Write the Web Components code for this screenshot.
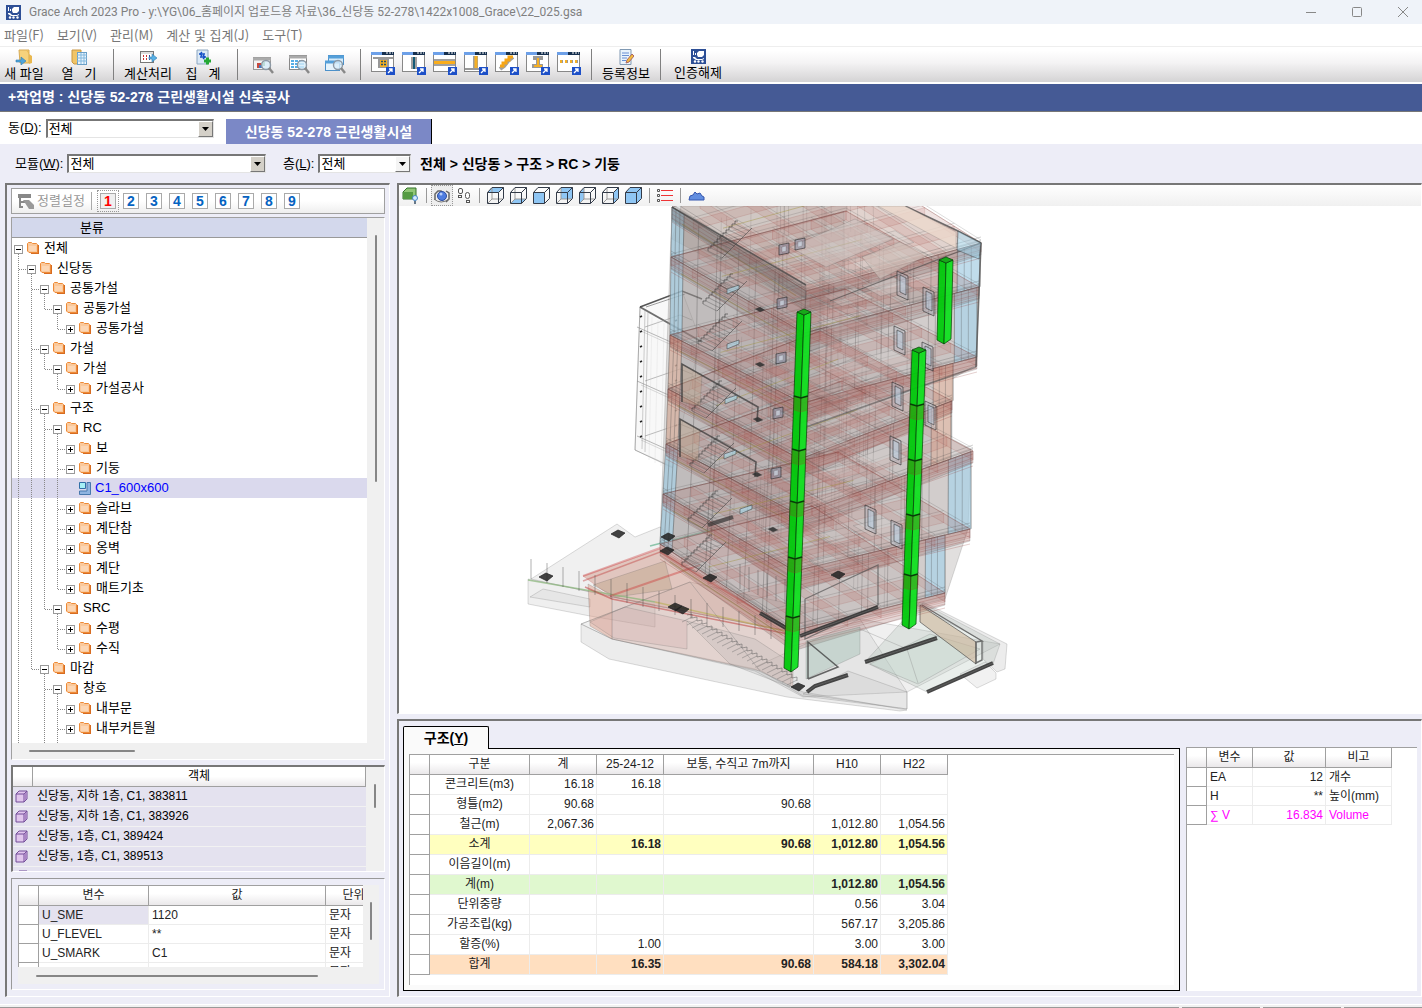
<!DOCTYPE html>
<html lang="ko">
<head>
<meta charset="utf-8">
<title>Grace Arch 2023 Pro</title>
<style>
	html, body { height: 100%; }
	body {
		margin: 0;
		overflow: hidden;
		background: #ededf7;
		color: #000;
		font: 13px/20px "Liberation Sans", "Noto Sans CJK KR", sans-serif;
		--line: #a0a0a0;
		--face: #ededf7;
	}
</style>
</head>
<body>
<grace-app></grace-app>

<script>
// Small drawings used on toolbars and in the lists
const smallWindow = (inner) => `<svg width="25" height="25" viewBox="0 0 25 25">
	<rect x=".5" y="1.5" width="22" height="19" fill="#fff" stroke="#888"/>
	<rect y="1" width="23" height="3" fill="#16304f"/><rect y="1" width="11" height="3" fill="#6da0e8"/>
	<path d="M15 2h2M18 2h2M21 2h1" stroke="#fff"/>${inner}
	<rect x="15" y="16" width="9" height="8" fill="#1d50c8"/><path d="M17 22l4-4M18 18h3v3" stroke="#fff" stroke-width="1.3" fill="none"/></svg>`

const cube = (face) => {
	const faces = {
		top: 'M1 5L5 1H16L12 5Z', bottom: 'M1 16L5 12H16L12 16Z', front: 'M1 5H12V16H1Z',
		back: 'M5 1H16V12H5Z', left: 'M1 5L5 1V12L1 16Z', right: 'M12 5L16 1V12L12 16Z',
		all: 'M1 5L5 1H16V12L12 16H1Z'
	}
	const inside = face === 'all' || face === 'front' ? '' : '<path d="M5 1V12M5 12H16M5 12L1 16" stroke="#999" fill="none"/>'
	return `<svg width="17" height="17" viewBox="0 0 17 17"><path d="${faces[face]}" fill="#8fc6f4"/>${inside}
	<path d="M.5 5.500H11.500V16.500H.5ZM.5 5.500L5 .5H16.500L11.500 5.500M16.500 .5V11.500L11.500 16.500" stroke="#333b48" fill="none"/></svg>`
}

const magnifier = '<circle cx="14" cy="11" r="4.5" fill="#d8edfa" fill-opacity=".8" stroke="#8d99a5" stroke-width="1.4"/><path d="M17 14l4 5" stroke="#888" stroke-width="2.4"/>'

const icons = {
	logo: `<svg width="15" height="15" viewBox="0 0 15 15"><rect width="15" height="15" fill="#2d4f96"/><path d="M2 2h1v4H2zM4 4h1v2H4zM6 4l2-2h5v4l-2 2H7L6 6zM2 8h2l2 2h5l2-1v1l-2 1H5L2 9z" fill="#fff"/><circle cx="4" cy="12.500" r="1.200" fill="#fff"/><circle cx="7.500" cy="12.500" r="1.200" fill="#fff"/><circle cx="11.500" cy="12.500" r="1.200" fill="#fff"/></svg>`,
	newFile: `<svg width="18" height="16" viewBox="0 0 18 16"><path d="M4 1h10v13H5z" fill="#f6d27c" stroke="#d7ab55"/><path d="M11 1l3 2v12l3-1V7l-3-2" fill="#e9b84f"/><path d="M1 11h5V8l5 4-5 4v-3H1z" fill="#4fa5dc" stroke="#347cb0" stroke-width=".6"/></svg>`,
	open: `<svg width="17" height="16" viewBox="0 0 17 16"><path d="M1 1h9v14H3L1 13z" fill="#f1c567" stroke="#c99742"/><rect x="6.5" y="3.500" width="9" height="12" fill="#eaf5fd" stroke="#6b9fc6"/><path d="M6 6h10M6 9h10M6 12h10M10 4v11M13 4v11" stroke="#83b8dd"/></svg>`,
	calc: `<svg width="18" height="16" viewBox="0 0 18 16"><rect x="1.500" y="2.500" width="13" height="11" fill="#fff" stroke="#777"/><path d="M2 4h12" stroke="#bbb"/><path d="M4 7h1M7 7h1M4 10h1M7 10h1" stroke="#c33" stroke-width="2"/><path d="M10 7h1M10 10h1" stroke="#349" stroke-width="2"/><path d="M10 8h3V5l5 4-5 4v-3h-3z" fill="#58b0e5" stroke="#347cb0" stroke-width=".6"/></svg>`,
	sum: `<svg width="16" height="16" viewBox="0 0 16 16"><path d="M2 1h11v14H2z" fill="#dbe9f6" stroke="#8ca6c0"/><path d="M4 5h6M7 3l-2 2 2 2M11 8H5M8 6l2 2-2 2" stroke="#1450c8" stroke-width="1.3" fill="none"/><path d="M9 12h7M12.500 8.500v7" stroke="#25a835" stroke-width="3"/></svg>`,
	view3d: `<svg width="22" height="21" viewBox="0 0 22 21"><rect x="1.500" y="3.500" width="17" height="12" fill="#f3f3f3" stroke="#999"/><path d="M1 5h18" stroke="#aaa" stroke-width="3"/><path d="M5 9h4v5H5z" fill="#c94a3f"/><path d="M10 8h3v4h-3z" fill="#4b9a58"/><path d="M7 11h4v3H7z" fill="#4678c1"/>${magnifier}</svg>`,
	viewTable: `<svg width="22" height="21" viewBox="0 0 22 21"><rect x="1.500" y="1.500" width="17" height="14" fill="#fff" stroke="#888"/><path d="M1 3h18" stroke="#aaa" stroke-width="3"/><path d="M3 6h13v8H3z" fill="#58aee6"/><path d="M3 8.500h13M3 11.500h13M6.500 6v8M10.500 6v8" stroke="#fff"/>${magnifier}</svg>`,
	viewWindows: `<svg width="22" height="21" viewBox="0 0 22 21"><rect x="4.500" y="1.500" width="15" height="9" fill="#d5ebfa" stroke="#4c91ca"/><path d="M4 3h16" stroke="#549fd9" stroke-width="3"/><rect x="1.500" y="7.500" width="14" height="9" fill="#e5f3fc" stroke="#4c91ca"/><path d="M1 8h15" stroke="#549fd9" stroke-width="3"/>${magnifier}</svg>`,
	footing: smallWindow('<path d="M2 7h20" stroke="#999" stroke-width="2"/><path d="M7 8h11v9H7z" fill="#999"/><path d="M9 9h7v7H9z" fill="#f6b025"/><path d="M10 10.500h2M13 10.500h2M10 13.500h2M13 13.500h2" stroke="#23506e" stroke-width="1.500"/>'),
	column: smallWindow('<path d="M9 6h6v12H9z" fill="#a0a0a0"/><path d="M12 6v12" stroke="#155a75" stroke-width="2"/>'),
	beam: smallWindow('<path d="M1 8h21v7H1z" fill="#a0a0a0"/><path d="M1 11.500h21" stroke="#f9ad1d" stroke-width="3"/>'),
	wall: smallWindow('<path d="M9 5h5v13H9z" fill="#a0a0a0"/><path d="M12 5v13" stroke="#f6b025" stroke-width="3"/><path d="M1 18h15" stroke="#999" stroke-width="2"/>'),
	stairs: smallWindow('<path d="M5 18l4-3 4-5 5-4" fill="none" stroke="#a0a0a0" stroke-width="4"/><path d="M5 15h3v-3h3V9h3V6h4" fill="none" stroke="#f6a515" stroke-width="3"/>'),
	steel: smallWindow('<path d="M7 7h10M6 15h11M12 7v9" stroke="#999" stroke-width="4"/><path d="M12 7v8M8 15h8" stroke="#f6b025" stroke-width="2"/>'),
	line: smallWindow('<path d="M3 10.500h18" stroke="#999" stroke-width="3" stroke-dasharray="3 2"/><path d="M3 10.500h18" stroke="#f6b025" stroke-width="3" stroke-dasharray="2 3"/>'),
	info: `<svg width="16" height="16" viewBox="0 0 16 16"><path d="M2 .5h11v15H2z" fill="#e9f3fc" stroke="#8099b3"/><path d="M4 4h7M4 6.500h7M4 9h5M4 11.500h4" stroke="#698fd3"/><path d="M8 14l1-3 5-6 2 2-5 6z" fill="#f3bd3b" stroke="#a66"/></svg>`,
	sort: `<svg width="17" height="16" viewBox="0 0 17 16"><path d="M1 1h13v4H1z" fill="#888"/><path d="M3 5v9h3M4 9h4" fill="none" stroke="#888" stroke-width="2"/><path d="M6 7h6l5 5v4h-5z" fill="#999"/></svg>`,
	object: `<svg width="17" height="18" viewBox="0 0 17 18"><path d="M1 5l4-4h9v8l-3 3H1z" fill="#91c776" stroke="#35732c"/><path d="M1 5h10v7H1z" fill="#559b43"/><circle cx="13" cy="11" r="2.500" fill="#d4eaff" stroke="#4686c4"/><path d="M13 14v3" stroke="#678" stroke-width="2"/></svg>`,
	orbit: `<svg width="18" height="16" viewBox="0 0 18 16"><path d="M2 12V6l3-3h3v3M13 3l3 2v6l-3 3" fill="none" stroke="#666" stroke-width="1.500"/><circle cx="9" cy="8" r="4.500" fill="#4f7de0" stroke="#2b4da0"/><path d="M1 11q7 6 15 0" fill="none" stroke="#777"/><circle cx="8" cy="6" r="1.500" fill="#b6cdfa"/></svg>`,
	walk: `<svg width="14" height="17" viewBox="0 0 14 17"><g fill="#fff" stroke="#555"><rect x="1.500" y="1.500" width="4" height="5" rx="1.500"/><rect x="1.500" y="8.500" width="3" height="2"/><rect x="8.500" y="5.500" width="4" height="6" rx="2"/><rect x="9.500" y="13.500" width="3" height="2"/></g></svg>`,
	layers: `<svg width="16" height="15" viewBox="0 0 16 15"><path d="M4 2.500h12M4 7.500h12M4 12.500h12" stroke="#ee3435"/><path d="M.5 1.500h2v2h-2zM.5 6.500h2v2h-2zM.5 11.500h2v2h-2z" fill="#fff" stroke="#555"/></svg>`,
	terrain: `<svg width="17" height="10" viewBox="0 0 17 10"><path d="M1 9L2 5l3-1 2-3 2 2 3-1 2 3 2 1v3z" fill="#628ee0" stroke="#3556ae"/></svg>`,
	folder: `<svg width="13" height="13" viewBox="0 0 13 13"><path d="M3 3h9v9H4z" fill="#d76c21"/><path d="M.5 1.500l1-1h3l1 1h4l1 1v8H2L.5 9z" fill="#fac99c" stroke="#ee8b38"/><path d="M2 4h7v5H2z" fill="#fee0c5" opacity=".6"/></svg>`,
	member: `<svg width="12" height="13" viewBox="0 0 12 13"><path d="M8 .5h3.500v12H.5V9H8z" fill="#8fb4e0" stroke="#4778ad"/><path d="M.5.5h6v6h-6z" fill="#a5f0f5" stroke="#316fa7"/></svg>`,
	box: `<svg width="13" height="13" viewBox="0 0 13 13"><path d="M1 4l3-3h8v8l-3 3H1z" fill="#e1c6ed" stroke="#734d98"/><path d="M1 4h8v8M9 4l3-3" fill="none" stroke="#734d98"/><path d="M9.500 4l2-2v7l-2 2z" fill="#aa84c4"/></svg>`
}
for(const face of [ 'top', 'bottom', 'front', 'back', 'left', 'right', 'all' ]) {
	icons['cube-' + face] = cube(face)
}

class UiIcon extends HTMLElement {
	constructor() {
		super()
		this.attachShadow({ mode: 'open' })
	}
	connectedCallback() {
		this.shadowRoot.innerHTML = `
		<style>
		:host { display: inline-flex; flex: none; }
		svg { display: block; }
		</style>${icons[this.getAttribute('name')]}`
	}
}
window.customElements.define('ui-icon', UiIcon)

class TitleBar extends HTMLElement {
	constructor() {
		super()
		this.attachShadow({ mode: 'open' })
		this.shadowRoot.innerHTML = `
		<style>
		:host {
			display: flex;
			align-items: center;
			gap: 8px;
			height: 24px;
			padding-left: 6px;
			background: #eff3f9;
			color: #808080;
			font: 12px/24px Roboto, "Noto Sans CJK KR", sans-serif;
		}
		.text { flex: 1; white-space: nowrap; }
		button {
			width: 38px;
			height: 24px;
			padding: 0;
			border: 0;
			background: none;
		}
		svg { display: block; margin: auto; fill: none; stroke: #888; }
		</style>
		<ui-icon name="logo"></ui-icon>
		<span class="text"><slot></slot></span>
		<button aria-label="최소화"><svg width="11" height="11"><path d="M0 5.500h10"/></svg></button>
		<button aria-label="최대화"><svg width="11" height="11"><rect x=".5" y=".5" width="9" height="9" rx="1"/></svg></button>
		<button aria-label="닫기"><svg width="11" height="11"><path d="M0 0l10 10M10 0L0 10"/></svg></button>
		`
	}
}
window.customElements.define('title-bar', TitleBar)

class MenuBar extends HTMLElement {
	constructor() {
		super()
		this.attachShadow({ mode: 'open' })
		this.shadowRoot.innerHTML = `
		<style>
		:host {
			display: flex;
			gap: 13px;
			height: 22px;
			padding-left: 4px;
			background: #fff;
			border-bottom: 1px solid #eee;
		}
		button {
			padding: 0;
			border: 0;
			background: none;
			color: #777;
			font: 13px/22px "Noto Sans CJK KR", sans-serif;
		}
		</style>
		<button>파일(F)</button><button>보기(V)</button><button>관리(M)</button><button>계산 및 집계(J)</button><button>도구(T)</button>
		`
	}
}
window.customElements.define('menu-bar', MenuBar)

class ToolButton extends HTMLElement {
	constructor() {
		super()
		this.attachShadow({ mode: 'open' })
	}
	connectedCallback() {
		const label = this.getAttribute('label')
		this.shadowRoot.innerHTML = `
		<style>
		:host { display: block; flex: none; }
		button {
			display: flex;
			flex-direction: column;
			align-items: center;
			justify-content: center;
			width: 100%;
			height: 100%;
			padding: 0;
			border: 0;
			background: none;
			color: #000;
			font: 13px/16px "Noto Sans CJK KR", sans-serif;
			white-space: pre;
		}
		</style>
		<button aria-label="${label || this.getAttribute('icon')}"><ui-icon name="${this.getAttribute('icon')}"></ui-icon>${label || ''}</button>
		`
	}
}
window.customElements.define('tool-button', ToolButton)

class MainToolbar extends HTMLElement {
	constructor() {
		super()
		this.attachShadow({ mode: 'open' })
		const shapes = [ 'footing', 'column', 'beam', 'wall', 'stairs', 'steel', 'line' ]
		this.shadowRoot.innerHTML = `
		<style>
		:host {
			display: flex;
			height: 35px;
			background: linear-gradient(#fff 10%, #f4f3f4 45%, #d4d3d4);
			border-bottom: 2px solid #fff;
		}
		div { display: flex; }
		.big { gap: 7px; }
		.big tool-button { width: 48px; }
		.view { gap: 6px; }
		.view tool-button { width: 30px; }
		.shape { gap: 7px; }
		.shape tool-button { width: 24px; height: 32px; }
		.license { padding-left: 3px; }
		i { width: 1px; margin: 2px 10px; background: #808080; }
		</style>
		<div class="big"><tool-button icon="newFile" label="새 파일"></tool-button><tool-button icon="open" label="열   기"></tool-button></div><i></i>
		<div class="big"><tool-button icon="calc" label="계산처리"></tool-button><tool-button icon="sum" label="집   계"></tool-button></div><i></i>
		<div class="view"><tool-button icon="view3d"></tool-button><tool-button icon="viewTable"></tool-button><tool-button icon="viewWindows"></tool-button></div><i></i>
		<div class="shape">${shapes.map((s) => `<tool-button icon="${s}"></tool-button>`).join('')}</div><i></i>
		<div class="big"><tool-button icon="info" label="등록정보"></tool-button></div><i></i>
		<div class="big license"><tool-button icon="logo" label="인증해제"></tool-button></div>
		`
	}
}
window.customElements.define('main-toolbar', MainToolbar)

// Labelled drop-down, the label goes in the slot
class ComboBox extends HTMLElement {
	constructor() {
		super()
		this.attachShadow({ mode: 'open' })
	}
	connectedCallback() {
		this.shadowRoot.innerHTML = `
		<style>
		:host { display: block; }
		label { display: flex; align-items: center; gap: 4px; white-space: nowrap; }
		.field {
			display: flex;
			position: relative;
			flex: 1;
			height: 16px;
			border: 1px solid #e4e4e4;
			border-top: 2px solid #777;
			border-left: 2px solid #777;
			background: #fff;
		}
		select {
			flex: 1;
			min-width: 0;
			padding: 0 1px;
			appearance: none;
			border: 0;
			background: none;
			color: #000;
			font: inherit;
			line-height: 16px;
		}
		svg {
			position: absolute;
			right: 0;
			top: 0;
			pointer-events: none;
			background: ${this.hasAttribute('light') ? '#f4f4f4' : '#d4d0c8'};
			border: 1px solid #fff;
			border-right-color: #777;
			border-bottom-color: #777;
		}
		</style>
		<label><span><slot></slot></span>
			<span class="field"><select><option>전체</option></select>
			<svg width="13" height="14"><path d="M3 5h7L6.500 9z"/></svg></span>
		</label>
		`
	}
}
window.customElements.define('combo-box', ComboBox)

class ScrollMark extends HTMLElement {
	constructor() {
		super()
		this.attachShadow({ mode: 'open' })
		this.shadowRoot.innerHTML = `
		<style>
		:host { display: block; background: #f0f0f0; }
		div { background: #868686; border-radius: 1px; width: 2px; height: 100%; margin: 0 auto; }
		:host([horizontal]) div { width: 100%; height: 2px; }
		</style>
		<div></div>
		`
	}
}
window.customElements.define('scroll-mark', ScrollMark)

class SortBar extends HTMLElement {
	constructor() {
		super()
		this.attachShadow({ mode: 'open' })
		const numbers = [ 1, 2, 3, 4, 5, 6, 7, 8, 9 ]
		this.shadowRoot.innerHTML = `
		<style>
		:host {
			display: flex;
			align-items: center;
			height: 24px;
			padding-left: 5px;
			border: 1px solid var(--line);
			background: linear-gradient(#fff 50%, #eee);
		}
		button { padding: 0; border: 0; background: none; font: inherit; }
		.sort { display: flex; align-items: center; gap: 3px; color: #999; }
		i { width: 1px; height: 18px; margin: 0 8px 0 6px; background: #aaa; }
		.numbers { display: flex; gap: 7px; }
		.numbers button {
			width: 16px;
			height: 16px;
			border: 1px solid #aaa;
			background: #fff;
			color: #0563c1;
			font: bold 14px/14px "Liberation Sans", sans-serif;
		}
		.numbers button:first-child { background: #f0f0f0; color: #f00; outline: 1px dotted #999; outline-offset: 2px; }
		</style>
		<button class="sort"><ui-icon name="sort"></ui-icon>정렬설정</button><i></i>
		<div class="numbers">${numbers.map((n) => `<button>${n}</button>`).join('')}</div>
		`
	}
}
window.customElements.define('sort-bar', SortBar)

class TreeView extends HTMLElement {
	constructor() {
		super()
		this.attachShadow({ mode: 'open' })
		// guides (I = line, T = branch, L = last branch), state, text
		const rows = [
			[ '', '-', '전체' ], [ 'T', '-', '신당동' ],
			[ 'IT', '-', '공통가설' ], [ 'IIL', '-', '공통가설' ], [ 'II L', '+', '공통가설' ],
			[ 'IT', '-', '가설' ], [ 'IIL', '-', '가설' ], [ 'II L', '+', '가설공사' ],
			[ 'IT', '-', '구조' ], [ 'IIT', '-', 'RC' ],
			[ 'IIIT', '+', '보' ], [ 'IIIT', '=', '기둥' ], [ 'IIII', '', 'C1_600x600' ],
			[ 'IIIT', '+', '슬라브' ], [ 'IIIT', '+', '계단참' ], [ 'IIIT', '+', '옹벽' ],
			[ 'IIIT', '+', '계단' ], [ 'IIIL', '+', '매트기초' ],
			[ 'IIL', '-', 'SRC' ], [ 'II T', '+', '수평' ], [ 'II L', '+', '수직' ],
			[ 'IL', '-', '마감' ], [ 'I T', '-', '창호' ],
			[ 'I IT', '+', '내부문' ], [ 'I IT', '+', '내부커튼월' ], [ 'I II', 'end', '' ]
		]
		const paths = { 'I': 'M6.500 0V20', 'T': 'M6.500 0V20M7 11.500H13', 'L': 'M6.500 0V11M7 11.500H13', ' ': '' }
		const dotted = (d) => `<path d="${d}" stroke="#888" stroke-dasharray="1 1"/>`
		const guide = (g) => `<svg width="13" height="20">${dotted(paths[g])}</svg>`
		const knob = (s, root) => s === '' ? '<svg width="13" height="20"></svg>' : `<svg width="13" height="20">
			${dotted((s === '-' ? 'M6.500 16V20' : '') + (root ? '' : 'M0 11.500H2'))}
			<rect x="2.500" y="7.500" width="8" height="8" fill="#fff" stroke="#999"/>
			<path d="M4 11.500H9${s === '+' ? 'M6.500 9V14' : ''}" stroke="#000"/></svg>`
		const row = ([ guides, state, text ]) => state === 'end'
			? `<li class="end">${[ ...guides ].map(guide).join('')}</li>`
			: `<li class="${state ? '' : 'selected'}">${[ ...guides ].map(guide).join('')}${knob(state, !guides)}<ui-icon name="${state ? 'folder' : 'member'}"></ui-icon>${text}</li>`
		this.shadowRoot.innerHTML = `
		<style>
		:host {
			display: grid;
			grid-template: minmax(0, 1fr) 16px / minmax(0, 1fr) 17px;
			border: 1px solid var(--line);
			border-right-color: #fff;
			border-bottom-color: #fff;
			background: #f0f0f0;
		}
		.body { overflow: hidden; background: #fff; }
		header {
			padding-left: 68px;
			line-height: 19px;
			background: #d3d8ec;
			border-bottom: 1px solid #999;
		}
		ul { margin: 0; padding: 0; list-style: none; }
		li { display: flex; align-items: center; height: 20px; white-space: nowrap; }
		li svg { display: block; flex: none; fill: none; }
		li ui-icon { margin: 0 4px 0 2px; }
		.selected { background: #dad9ed; color: #00f; }
		.v { padding: 17px 0 261px; }
		.h { padding: 7px 232px 0 17px; }
		</style>
		<div class="body"><header>분류</header><ul>${rows.map(row).join('')}</ul></div>
		<scroll-mark class="v"></scroll-mark>
		<scroll-mark class="h" horizontal></scroll-mark>
		`
	}
}
window.customElements.define('tree-view', TreeView)

class ObjectList extends HTMLElement {
	constructor() {
		super()
		this.attachShadow({ mode: 'open' })
		const objects = [ '신당동, 지하 1층, C1, 383811', '신당동, 지하 1층, C1, 383926', '신당동, 1층, C1, 389424', '신당동, 1층, C1, 389513', '' ]
		this.shadowRoot.innerHTML = `
		<style>
		:host {
			display: flex;
			height: 104px;
			overflow: hidden;
			border: 1px solid #fff;
			border-top: 2px solid #777;
			border-left: 2px solid #777;
			background: #f0f0f0;
		}
		table { flex: 1; border-collapse: separate; border-spacing: 0; table-layout: fixed; font-size: 12px; }
		col:first-child { width: 20px; }
		th, td { height: 19px; padding: 0; line-height: 19px; }
		th { font-weight: normal; background: linear-gradient(#fff 50%, #eceaec); border: solid #a0a0a0; border-width: 0 1px 1px 0; }
		td { background: #e4e2ef; border-bottom: 1px solid #f2f2f2; }
		td + td { padding-left: 4px; }
		td ui-icon { display: flex; padding-left: 2px; }
		scroll-mark { width: 18px; padding: 17px 0 63px; }
		</style>
		<table><colgroup><col><col></colgroup>
			<tr><th></th><th>객체</th></tr>
			${objects.map((o) => `<tr><td><ui-icon name="box"></ui-icon></td><td>${o}</td></tr>`).join('')}
		</table>
		<scroll-mark></scroll-mark>
		`
	}
}
window.customElements.define('object-list', ObjectList)

// Table with a row header gutter. Data comes from the grids map by name.
const grids = {
	variables: {
		widths: [ 20, 110, 177, 56 ], row: 18,
		head: [ '변수', '값', '단위' ],
		align: [ 'left', 'left', 'left' ],
		rows: [ [ 'first', 'U_SME', '1120', '문자' ], [ '', 'U_FLEVEL', '**', '문자' ], [ '', 'U_SMARK', 'C1', '문자' ], [ '', 'U_SYMB', '', '문자' ] ]
	},
	quantity: {
		widths: [ 20, 100, 67, 67, 150, 67, 67 ], row: 19,
		head: [ '구분', '계', '25-24-12', '보통, 수직고 7m까지', 'H10', 'H22' ],
		align: [ 'center', 'right', 'right', 'right', 'right', 'right' ],
		rows: [
			[ '', '콘크리트(m3)', '16.18', '16.18', '', '', '' ],
			[ '', '형틀(m2)', '90.68', '', '90.68', '', '' ],
			[ '', '철근(m)', '2,067.36', '', '', '1,012.80', '1,054.56' ],
			[ 'sub', '소계', '', '16.18', '90.68', '1,012.80', '1,054.56' ],
			[ '', '이음길이(m)', '', '', '', '', '' ],
			[ 'sum', '계(m)', '', '', '', '1,012.80', '1,054.56' ],
			[ '', '단위중량', '', '', '', '0.56', '3.04' ],
			[ '', '가공조립(kg)', '', '', '', '567.17', '3,205.86' ],
			[ '', '할증(%)', '', '1.00', '', '3.00', '3.00' ],
			[ 'total', '합계', '', '16.35', '90.68', '584.18', '3,302.04' ]
		]
	},
	result: {
		widths: [ 20, 46, 73, 66 ], row: 18,
		head: [ '변수', '값', '비고' ],
		align: [ 'left', 'right', 'left' ],
		rows: [ [ '', 'EA', '12', '개수' ], [ '', 'H', '**', '높이(mm)' ], [ 'volume', '∑ V', '16.834', 'Volume' ] ]
	}
}

class DataGrid extends HTMLElement {
	constructor() {
		super()
		this.attachShadow({ mode: 'open' })
	}
	connectedCallback() {
		const grid = grids[this.getAttribute('name')]
		const total = grid.widths.reduce((a, b) => a + b, 0)
		this.shadowRoot.innerHTML = `
		<style>
		:host {
			display: block;
			overflow: hidden;
			background: #fff;
			border: solid var(--line);
			border-width: 1px 0 0 1px;
			color: #222;
		}
		table { width: ${total}px; table-layout: fixed; border-collapse: separate; border-spacing: 0; font-size: 12px; }
		th, td {
			box-sizing: border-box;
			height: ${grid.row + 1}px;
			padding: 0 2px;
			line-height: ${grid.row}px;
			border: solid #ececec;
			border-width: 0 1px 1px 0;
			white-space: nowrap;
		}
		th { font-weight: normal; border-color: var(--line); }
		thead th { height: 20px; line-height: 19px; background: linear-gradient(#fff 40%, #eae8ea); }
		.left { padding-left: 3px; text-align: left; }
		.center { text-align: center; }
		.right { text-align: right; }
		.sub td { background: #ffffbf; }
		.sum td { background: #e0f8cf; }
		.total td { background: #ffdfc0; }
		.sub .right, .sum .right, .total .right { font-weight: bold; }
		.first td:nth-child(2) { background: #e4e2ef; }
		.volume { color: #f0f; }
		</style>
		<table>
			<colgroup>${grid.widths.map((w) => `<col style="width: ${w}px">`).join('')}</colgroup>
			<thead><tr><th></th>${grid.head.map((h) => `<th>${h}</th>`).join('')}</tr></thead>
			<tbody>${grid.rows.map(([ kind, ...cells ]) => `<tr class="${kind}"><th></th>${cells.map((c, i) => `<td class="${grid.align[i]}">${c}</td>`).join('')}</tr>`).join('')}</tbody>
		</table>
		`
	}
}
window.customElements.define('data-grid', DataGrid)

class ViewToolbar extends HTMLElement {
	constructor() {
		super()
		this.attachShadow({ mode: 'open' })
		const faces = [ 'top', 'bottom', 'front', 'back', 'left', 'right', 'all' ]
		this.shadowRoot.innerHTML = `
		<style>
		:host {
			display: flex;
			height: 21px;
			background: linear-gradient(#fff, #f0f0f0);
		}
		tool-button { width: 23px; }
		.nav { width: 22px; }
		.on { background: #eee; outline: 1px dotted #999; outline-offset: -1px; }
		i { width: 1px; margin: 3px 4px; background: #999; }
		</style>
		<tool-button icon="object"></tool-button><i></i>
		<tool-button icon="orbit" class="nav on"></tool-button><tool-button icon="walk" class="nav"></tool-button><i></i>
		${faces.map((f) => `<tool-button icon="cube-${f}"></tool-button>`).join('')}<i></i>
		<tool-button icon="layers" class="nav"></tool-button><i></i>
		<tool-button icon="terrain"></tool-button>
		`
	}
}
window.customElements.define('view-toolbar', ViewToolbar)

// Building model: floors are stacked quads seen from the front corner
class ModelView extends HTMLElement {
	constructor() {
		super()
		this.attachShadow({ mode: 'open' })
		this.shadowRoot.innerHTML = `
		<style>
		:host { display: block; min-height: 0; overflow: hidden; background: #fff; }
		svg { display: block; width: 100%; height: 100%; }
		</style>
		<svg viewBox="399 207 1022 505" preserveAspectRatio="xMidYMin meet" role="img" aria-label="3D 모델">
			${this._site()}${this._frame()}${this._building()}${this._details()}${this._columns()}
		</svg>
		`
	}
	_poly(points, fill, alpha = 1, stroke = '#555', strokeAlpha = 0.3) {
		return `<polygon points="${points}" fill="${fill}" fill-opacity="${alpha}" stroke="${stroke}" stroke-opacity="${strokeAlpha}" stroke-width=".7"/>`
	}
	_line(points, stroke, width = 0.7, alpha = 1) {
		return `<polyline points="${points}" fill="none" stroke="${stroke}" stroke-width="${width}" stroke-opacity="${alpha}"/>`
	}
	_site() {
		return [
			this._poly('531,580 617,525 635,538 660,528 700,560 793,633 650,606', '#999', .15),
			this._poly('528,580 655,606 655,628 590,617 528,605', '#999', .16),
			this._poly('543,590 590,600 590,608 530,598', '#999', .1),
			this._poly('581,625 612,640 755,670 803,693 907,711 900,712 787,698 609,660 581,643', '#aaa', .22),
			this._poly('581,625 690,583 860,620 1000,645 907,693 803,698 755,672 612,640', '#999', .15),
			this._poly('755,668 860,620 907,693 907,710 803,697', '#888', .1),
			this._poly('612,640 612,598 793,633 793,688 760,672', '#c99a90', .34),
			this._poly('590,627 588,585 612,598 612,640', '#db9982', .45),
			this._poly('583,577 660,550 793,633 612,598', '#cc8c7c', .42, '#c44'),
			this._poly('593,586 665,562 672,590 616,598', '#b9a184', .4),
			this._poly('590,623 625,608 687,622 687,650 614,639', '#c99', .2),
			this._poly('687,622 755,640 793,665 790,688 730,665', '#aaa', .2),
			this._poly('865,663 920,603 1000,645 993,665 927,693', '#a3b7aa', .24),
			this._poly('870,665 930,635 980,650 918,685', '#bdd4c9', .3),
			this._poly('923,603 1007,645 1005,670 997,673 983,660 983,642 920,608', '#aaa', .22),
			this._poly('920,606 976,643 976,665 920,623', '#cbb498', .6, '#333', .8),
			this._line('922,606 982,642 976,643 976,664 982,661 982,642', '#555', 1.4, .8),
			this._poly('803,695 848,672 907,693 907,710', '#aaa', .15),
			this._poly('960,675 985,663 996,674 996,680 977,689', '#bbb', .2),
			this._line('528,581 655,603', '#88b577', 1.5, .7),
			this._line('655,603 793,634', '#bdb060', 1.3, .7),
			this._line('650,547 715,530', '#62b28d', 1.5, .7),
			this._line('583,577 660,549', '#c44', 2, .4),
			this._line('583,582 660,553 791,632', '#b33', 1.5, .4),
			this._line('585,588 612,600 793,636', '#b33', 1.5, .5),
			this._line('610,597 700,566', '#c33', 2, .4),
			this._line('581,625 690,583 760,672', '#777', .7, .5),
			this._line('860,630 907,650 918,684', '#888', .7, .5)
		].join('')
	}
	_frame() {
		let out = this._poly('640,308 682,292 700,340 673,468 635,451', '#aaa', .08)
		out += this._line('640,308 682,292 702,300', '#333', 1.5, .8)
		out += this._line('640,308 702,343', '#333', 2, .7)
		out += this._line('646,308 685,295', '#555', .7, .8)
		out += this._line('640,308 635,451 673,469', '#777', .8, .6)
		out += this._line('645,311 642,450', '#888', .7, .6)
		out += this._line('648,312 645,453', '#888', .7, .6)
		for(const y of [ 328, 382, 437 ]) {
			out += this._line(`645,${y} 680,${y - 12} 692,${y - 7}`, '#888', .8, .7)
			out += this._line(`637,${y} 700,${y + 28}`, '#888', 1, .6)
			out += this._line(`641,${y + 4} 700,${y + 31}`, '#999', .6, .6)
		}
		for(let y = 318; y < 450; y += 15) {
			out += this._line(`640,${y} 642,${y - 1}`, '#222', 1.6)
			out += this._line(`675,${y + 4} 677,${y + 3}`, '#333', 1.4)
		}
		for(let x = 652; x < 672; x += 6) {
			out += this._line(`${x},${312 + (x - 640) / 2} ${x - 3},${455 + (x - 640) / 2}`, '#ccc', .5, .5)
		}
		return out
	}
	_building() {
		// left, front and right corner of each floor, from the roof down
		const floors = [
			[ [ 672, 208 ], [ 806, 292 ], [ 981, 244 ] ],
			[ [ 671, 258 ], [ 804, 334 ], [ 979, 288 ] ],
			[ [ 670, 336 ], [ 802, 404 ], [ 977, 358 ] ],
			[ [ 668, 390 ], [ 800, 460 ], [ 952, 402 ] ],
			[ [ 666, 445 ], [ 797, 515 ], [ 973, 452 ] ],
			[ [ 663, 495 ], [ 795, 572 ], [ 970, 530 ] ],
			[ [ 660, 545 ], [ 793, 632 ], [ 945, 594 ] ]
		]
		// x of the right edge of each storey: the upper two overhang
		const edges = [ 980, 977, 953, 951, 971, 945 ]
		const cut = ([ l, f, r ], x) => [ l, f, [ x, f[1] + (x - f[0]) * (r[1] - f[1]) / (r[0] - f[0]) ] ]
		const at = ([ l, f, r ], a, b, dy = 0) => {
			const x = l[0] + a * (f[0] - l[0]) + b * (r[0] - f[0])
			const y = l[1] + a * (f[1] - l[1]) + b * (r[1] - f[1]) + dy
			return `${x.toFixed(1)},${y.toFixed(1)}`
		}
		const steps = [ 0, .16, .36, .58, .8, 1 ]
		let out = ''
		out += this._poly('681,207 905,207 958,232 958,300 806,312 672,240', '#d3bdb4', .6)
		out += this._poly('672,208 806,290 979,288 976,366 952,380 952,440 971,450 968,530 945,600 793,636 660,545', '#a8a09e', .34)
		// outer walls and glazing between two floors
		for(let i = 0; i < 6; i++) {
			const up = cut(floors[i], edges[i])
			const down = cut(floors[i + 1], edges[i])
			const side = i !== 2 && i !== 3
			const glass = side ? '#a4d6ef' : '#e5b8a2'
			out += this._poly([ at(up, 0, 0), at(up, 1, 0), at(down, 1, 0), at(down, 0, 0) ].join(' '), '#8b7b79', .24)
			out += this._poly([ at(up, 1, 0), at(up, 1, 1), at(down, 1, 1), at(down, 1, 0) ].join(' '), '#a08e8b', .22)
			out += this._poly([ at(up, 0, 0), at(up, 0, 1), at(down, 0, 1), at(down, 0, 0) ].join(' '), '#889092', .18)
			out += this._poly([ at(up, 0, 0), at(up, .09, 0), at(down, .09, 0), at(down, 0, 0) ].join(' '), glass, .6)
			out += this._poly([ at(up, 1, .87), at(up, 1, 1), at(down, 1, 1), at(down, 1, .87) ].join(' '), glass, .6)
			for(const s of [ .03, .06, .09, .2, .34, .37, .5, .63, .77, .8, 1 ]) {
				out += this._line(`${at(up, s, 0)} ${at(down, s, 0)}`, '#444', .7, .45)
				out += this._line(`${at(up, s, .6)} ${at(down, s, .6)}`, '#555', .6, .3)
			}
			for(const s of [ .13, .16, .3, .45, .49, .62, .72, .76, .87, .91, .95, 1 ]) {
				out += this._line(`${at(up, 1, s)} ${at(down, 1, s)}`, '#444', .7, .4)
				out += this._line(`${at(up, .2, s)} ${at(down, .2, s)}`, '#555', .6, .25)
			}
		}
		// slabs with their beams
		floors.forEach((floor, i) => {
			out += this._poly([ at(floor, 0, 0), at(floor, 1, 0), at(floor, 1, 1), at(floor, 0, 1) ].join(' '), '#8a7a77', i ? .1 : .04, '#6a3431', .35)
			for(const s of steps) {
				const across = [ at(floor, 0, s), at(floor, 1, s), at(floor, 1, s, 9), at(floor, 0, s, 9) ].join(' ')
				const along = [ at(floor, s, 0), at(floor, s, 1), at(floor, s, 1, 9), at(floor, s, 0, 9) ].join(' ')
				if(i > 0 || s > 0) {
					out += this._poly(across, '#b9615c', .14, '#983835', .22)
					out += this._poly(along, '#b9615c', .14, '#983835', .22)
				}
				out += this._line(`${at(floor, 0, s, -3)} ${at(floor, 1, s, -3)}`, '#444', .6, .3)
				out += this._line(`${at(floor, s, 0, -3)} ${at(floor, s, 1, -3)}`, '#444', .6, .3)
			}
			// open bays seen through the frame
			if(i < 6) {
				for(const [ a, b ] of [ [ .62, .4 ], [ .62, .62 ], [ .84, .2 ] ]) {
					out += this._poly([ at(floor, a, b, 10), at(floor, a + .14, b, 10), at(floor, a + .14, b + .18, 10), at(floor, a, b + .18, 10) ].join(' '), '#d6d2cf', .4)
				}
			}
			for(const dy of [ -6, -2, 3, 7, 11, 15 ]) {
				out += this._line(`${at(floor, 0, 0, dy)} ${at(floor, 1, 0, dy)} ${at(floor, 1, 1, dy)}`, dy % 2 ? '#8e3835' : '#444', .7, .35)
			}
			const band = [ at(floor, 0, 0), at(floor, 1, 0), at(floor, 1, 1), at(floor, 1, 1, 12), at(floor, 1, 0, 20), at(floor, 0, 0, 12) ].join(' ')
			out += this._poly(band, i > 1 ? '#8a4540' : '#77696a', .22)
			out += this._line(`${at(floor, .25, .1, 5)} ${at(floor, .25, .9, 5)}`, '#9b8e35', 1, .4)
			out += this._line(`${at(floor, .05, .02, 14)} ${at(floor, .9, .02, 14)}`, '#8d8243', 1.4, .4)
		})
		return out
	}
	_details() {
		let out = ''
		// roof parapet
		out += this._poly('672,208 806,286 806,300 672,222', '#555', .2)
		out += this._poly('790,248 855,220 893,240 826,268', '#cfc7c3', .6)
		out += this._poly('862,258 900,243 928,256 880,280', '#d0c5be', .6)
		out += this._line('672,208 806,286', '#444', 1.6, .7)
		out += this._line('905,207 958,232 981,244 976,368', '#555', 1.6, .8)
		out += this._line('830,302 981,244', '#444', 1.2, .6)
		out += this._line('976,368 806,428', '#444', 1.4, .5)
		out += this._poly('878,207 905,207 956,233 956,249', '#ecd9cd', .8)
		out += this._poly('958,232 981,244 979,260 957,251', '#9acbe2', .5, '#333', .6)
		// stair flights
		const stairs = [ [ 738, 222 ], [ 733, 275 ], [ 728, 315 ], [ 722, 382 ], [ 720, 437 ], [ 718, 492 ], [ 712, 536 ] ]
		for(const [ x, y ] of stairs) {
			let steps = `${x},${y}`
			for(let i = 1; i < 11; i++) {
				steps += ` ${x - i * 3},${y + (i - 1) * 3} ${x - i * 3},${y + i * 3}`
				out += this._line(`${x - i * 3},${y + i * 3} ${x - i * 3 + 14},${y + i * 3 + 7}`, '#444', .6, .6)
			}
			out += this._line(steps, '#333', .8, .7)
			out += this._line(`${x + 14},${y + 7} ${x - 16},${y + 37}`, '#444', .8, .7)
		}
		let outside = '687,616'
		for(let i = 1; i < 23; i++) {
			outside += ` ${687 + i * 5},${612 + i * 3} ${687 + i * 5},${616 + i * 3}`
			out += this._line(`${687 + i * 5},${615 + i * 3} ${677 + i * 5},${620 + i * 3}`, '#666', .7, .6)
		}
		out += this._line(outside, '#555', .8, .6)
		// door and window frames
		for(const [ x, y ] of [ [ 682, 365 ], [ 680, 420 ] ]) {
			out += this._poly(`${x},${y} ${x + 20},${y + 11} ${x + 18},${y + 42} ${x},${y + 38}`, '#bda184', .4)
			out += this._line(`${x},${y + 38} ${x},${y} ${x + 76},${y + 43} ${x + 75},${y + 58}`, '#333', 1.6, .7)
		}
		for(const [ x, y ] of [ [ 897, 272 ], [ 923, 288 ], [ 894, 327 ], [ 922, 343 ], [ 892, 383 ], [ 925, 402 ], [ 890, 437 ], [ 865, 506 ], [ 891, 521 ] ]) {
			out += this._poly(`${x},${y} ${x + 11},${y + 5} ${x + 11},${y + 29} ${x},${y + 24}`, '#aeb9ca', .3, '#222', .8)
			out += this._poly(`${x + 3},${y + 4} ${x + 9},${y + 7} ${x + 9},${y + 24} ${x + 3},${y + 21}`, '#b9d5ec', .4, '#222', .7)
		}
		for(const [ x, y ] of [ [ 779, 246 ], [ 795, 241 ], [ 777, 300 ], [ 776, 355 ], [ 773, 410 ], [ 771, 470 ] ]) {
			out += this._poly(`${x},${y} ${x + 10},${y - 2} ${x + 10},${y + 8} ${x},${y + 10}`, '#868ea5', .5, '#222', .8)
			out += this._poly(`${x + 3},${y + 2} ${x + 7},${y + 1} ${x + 7},${y + 6} ${x + 3},${y + 7}`, '#dce6f2', .6)
		}
		for(const [ x, y ] of [ [ 727, 290 ], [ 727, 345 ], [ 725, 400 ], [ 724, 455 ], [ 740, 510 ] ]) {
			out += this._poly(`${x},${y} ${x + 12},${y - 4} ${x + 12},${y} ${x},${y + 5}`, '#aadcef', .6, '#333', .7)
			out += this._poly(`${x + 28},${y + 20} ${x + 33},${y + 18} ${x + 38},${y + 21} ${x + 33},${y + 23}`, '#333', .9)
		}
		// entrance
		out += this._poly('806,642 860,628 860,655 806,680', '#71a391', .25)
		out += this._line('808,680 808,643 838,668 808,680', '#444', 1.5, .8)
		out += this._line('805,600 878,566 878,606 805,640 805,600', '#555', 1.3, .7)
		for(let x = 740; x < 792; x += 9) {
			out += this._line(`${x},${565 + (x - 740) / 3} ${x},${590 + (x - 740) / 3}`, '#555', .8, .6)
		}
		for(let x = 531; x < 790; x += 16) {
			out += this._line(`${x},${560 + (x - 531) / 4} ${x},${580 + (x - 531) / 4}`, '#444', .7, .6)
		}
		// trench covers and kerbs
		const dark = [ '865,663 937,639', '927,693 993,664', '807,693 815,687 848,676', '800,637 878,608', '760,614 786,629' ]
		for(const points of dark) {
			out += this._line(points, '#333', 4, .9)
			out += this._line(points, '#777', 1, .5)
		}
		out += this._line('708,526 733,518', '#333', 4, .7)
		for(const [ x, y ] of [ [ 618, 535 ], [ 546, 578 ], [ 668, 538 ], [ 667, 552 ], [ 675, 608 ], [ 682, 611 ], [ 798, 688 ], [ 710, 579 ], [ 838, 576 ] ]) {
			out += this._poly(`${x - 7},${y} ${x},${y - 4} ${x + 7},${y - 1} ${x + 1},${y + 4}`, '#222', .85, '#222', 1)
		}
		return out
	}
	_columns() {
		const columns = [
			{ top: [ 804, 315 ], bottom: [ 791, 671 ], cuts: [ 399, 452, 504, 560, 619 ] },
			{ top: [ 919, 353 ], bottom: [ 909, 628 ], cuts: [ 407, 462, 517, 577 ] },
			{ top: [ 946, 263 ], bottom: [ 944, 343 ], cuts: [] }
		]
		let out = ''
		for(const { top, bottom, cuts } of columns) {
			const [ tx, ty ] = top
			const [ bx, by ] = bottom
			out += this._poly(`${tx - 7},${ty - 2} ${tx},${ty + 1} ${bx},${by + 2} ${bx - 7},${by - 2}`, '#00c90b', .95, '#063d08', 1)
			out += this._poly(`${tx},${ty + 1} ${tx + 7},${ty - 2} ${bx + 7},${by - 3} ${bx},${by + 2}`, '#10e020', .95, '#063d08', 1)
			out += this._poly(`${tx - 7},${ty - 2} ${tx},${ty - 5} ${tx + 7},${ty - 2} ${tx},${ty + 1}`, '#18a81a', 1, '#063d08', 1)
			for(const y of cuts) {
				const x = tx + (bx - tx) * (y - ty) / (by - ty)
				out += this._poly(`${x - 7},${y - 2} ${x},${y} ${x + 7},${y - 2} ${x + 7},${y + 12} ${x},${y + 14} ${x - 7},${y + 12}`, '#7a4a12', .25, '#a33', .3)
				out += this._line(`${x - 7},${y - 2} ${x},${y} ${x + 7},${y - 2}`, '#063d08', 1.4)
			}
		}
		return out
	}
}
window.customElements.define('model-view', ModelView)

class QuantityPanel extends HTMLElement {
	constructor() {
		super()
		this.attachShadow({ mode: 'open' })
		this.shadowRoot.innerHTML = `
		<style>
		:host { display: flex; gap: 6px; padding: 5px 4px 5px 4px; }
		.left { flex: 1; min-width: 0; display: flex; flex-direction: column; }
		.tab {
			align-self: flex-start;
			position: relative;
			width: 86px;
			height: 23px;
			margin-bottom: -1px;
			padding: 0;
			border: 1px solid #000;
			border-bottom: 0;
			border-radius: 2px 2px 0 0;
			background: #fafafa;
			color: #000;
			font: bold 14px/20px "Liberation Sans", "Noto Sans CJK KR", sans-serif;
		}
		.page {
			flex: 1;
			padding: 5px;
			border: 1px solid #000;
			background: #fafafa;
		}
		.page data-grid { height: 230px; }
		.side { width: 230px; margin-top: 21px; }
		</style>
		<div class="left">
			<button class="tab">구조(<u>Y</u>)</button>
			<div class="page"><data-grid name="quantity"></data-grid></div>
		</div>
		<data-grid class="side" name="result"></data-grid>
		`
	}
}
window.customElements.define('quantity-panel', QuantityPanel)

class GraceApp extends HTMLElement {
	constructor() {
		super()
		this.attachShadow({ mode: 'open' })
		this.shadowRoot.innerHTML = `
		<style>
		:host { display: flex; flex-direction: column; height: 100vh; }
		.job {
			height: 27px;
			padding-left: 8px;
			background: #455a95;
			border-bottom: 1px solid #777;
			color: #fff;
			font-weight: bold;
			font-size: 14px;
			line-height: 27px;
		}
		.dong { display: flex; align-items: flex-end; height: 32px; padding-left: 8px; gap: 12px; background: #fff; }
		.dong combo-box { width: 206px; align-self: center; }
		.dong button {
			width: 206px;
			height: 25px;
			padding: 0;
			border: 0;
			border-right: 1px solid #000;
			background: #7b88c6;
			color: #fff;
			font: bold 14px/24px "Liberation Sans", "Noto Sans CJK KR", sans-serif;
		}
		.module { display: flex; align-items: center; height: 39px; padding-left: 15px; }
		.module .wide { width: 251px; margin-right: 17px; }
		.module .narrow { width: 128px; margin-right: 9px; }
		.module nav { font-weight: bold; font-size: 14px; }
		.work { flex: 1; min-height: 0; display: flex; gap: 7px; padding-left: 5px; }
		.sunken {
			border: 1px solid #fff;
			border-top: 2px solid #777;
			border-left: 2px solid #777;
			background: var(--face);
		}
		aside {
			box-sizing: border-box;
			width: 385px;
			display: flex;
			flex-direction: column;
			padding: 3px 4px 6px;
		}
		tree-view { flex: 1; min-height: 0; margin: 3px 0 5px; }
		.props {
			margin-top: 6px;
			padding: 6px 5px 5px 6px;
			border: 1px solid #fff;
			border-top-color: #999;
			border-left-color: #999;
		}
		.props > div { display: grid; grid-template: 82px 17px / minmax(0, 1fr) 16px; background: #f0f0f0; }
		.v { padding: 17px 0 27px; }
		.h { padding: 8px 45px 0 18px; }
		main { flex: 1; min-width: 0; display: flex; flex-direction: column; gap: 5px; }
		.model { flex: 1; min-height: 0; display: flex; flex-direction: column; }
		model-view { flex: 1; }
		footer { display: flex; gap: 3px; height: 3px; margin-top: 7px; border-top: 1px solid #fff; background: #f0f0f0; }
		footer span { width: 78px; border-bottom: 1px solid #999; }
		footer span:first-child { flex: 1; }
		</style>
		<title-bar>Grace Arch 2023 Pro - y:\\YG\\06_홈페이지 업로드용 자료\\36_신당동 52-278\\1422x1008_Grace\\22_025.gsa</title-bar>
		<menu-bar></menu-bar>
		<main-toolbar></main-toolbar>
		<div class="job">+작업명 : 신당동 52-278 근린생활시설 신축공사</div>
		<div class="dong"><combo-box>동(<u>D</u>):</combo-box><button>신당동 52-278 근린생활시설</button></div>
		<div class="module">
			<combo-box class="wide">모듈(<u>W</u>):</combo-box>
			<combo-box class="narrow" light>층(<u>L</u>):</combo-box>
			<nav>전체 &gt; 신당동 &gt; 구조 &gt; RC &gt; 기둥</nav>
		</div>
		<div class="work">
			<aside class="sunken">
				<sort-bar></sort-bar>
				<tree-view></tree-view>
				<object-list></object-list>
				<div class="props"><div>
					<data-grid name="variables"></data-grid><scroll-mark class="v"></scroll-mark>
					<scroll-mark class="h" horizontal></scroll-mark>
				</div></div>
			</aside>
			<main>
				<div class="model sunken"><view-toolbar></view-toolbar><model-view></model-view></div>
				<quantity-panel class="sunken"></quantity-panel>
			</main>
		</div>
		<footer><span></span><span></span><span></span><span></span></footer>
		`
	}
}
window.customElements.define('grace-app', GraceApp)
</script>
</body>
</html>
